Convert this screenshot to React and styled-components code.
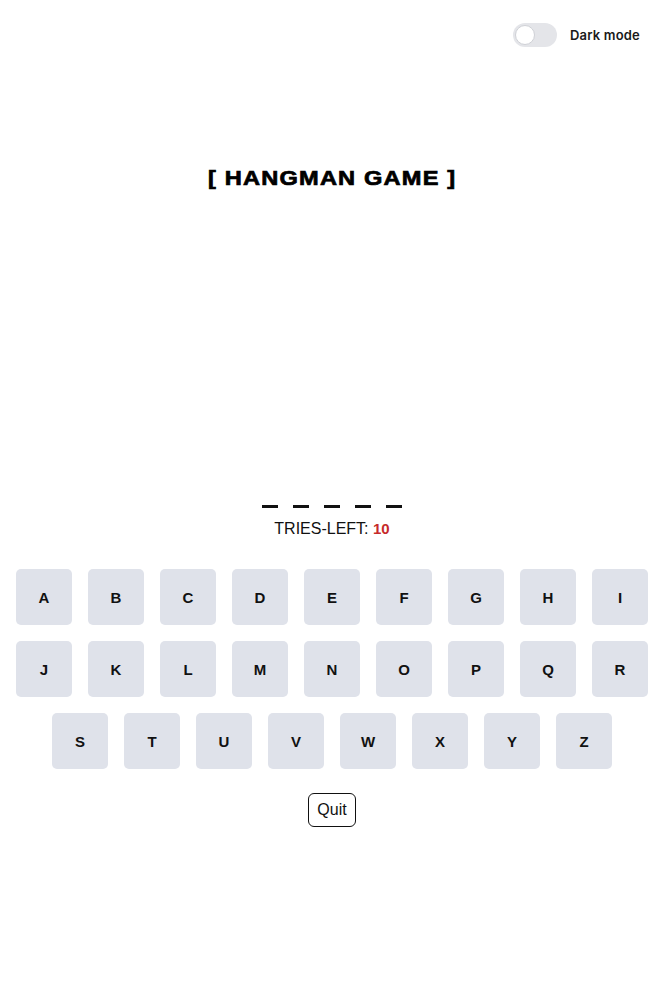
import React, { useState } from "react";
import styled, { createGlobalStyle } from "styled-components";

const GlobalStyle = createGlobalStyle`
  html, body {
    margin: 0;
    padding: 0;
    background: #ffffff;
    font-family: "Liberation Sans", Arial, sans-serif;
    color: #111;
  }
`;

const Page = styled.div`
  width: 664px;
  min-height: 991px;
  display: flex;
  flex-direction: column;
  align-items: center;
`;

const TopBar = styled.div`
  align-self: stretch;
  display: flex;
  justify-content: flex-end;
  align-items: center;
  gap: 13px;
  padding: 23px 24px 0 0;
  height: 24px;
`;

const Switch = styled.button`
  width: 44px;
  height: 24px;
  border-radius: 12px;
  border: none;
  padding: 2px;
  background: #e4e5e9;
  display: flex;
  align-items: center;
  justify-content: ${({ on }) => (on ? "flex-end" : "flex-start")};
  cursor: pointer;
`;

const Knob = styled.span`
  width: 18px;
  height: 18px;
  border-radius: 50%;
  background: #ffffff;
  border: 1px solid #cfd1d6;
`;

const SwitchLabel = styled.span`
  font-family: "Inter", "Liberation Sans", sans-serif;
  font-size: 13px;
  font-weight: 600;
  letter-spacing: 0.2px;
  color: #1a1a1a;
`;

const Title = styled.h1`
  margin: 119px 0 0;
  font-family: "Liberation Sans", Arial, sans-serif;
  font-weight: 700;
  font-size: 20px;
  letter-spacing: 1px;
  line-height: 24px;
  transform: scaleX(1.18);
  -webkit-text-stroke: 0.7px #000;
  color: #000;
`;

const Gallows = styled.div`
  height: 309px;
`;

const Word = styled.div`
  display: flex;
  gap: 15px;
  height: 14px;
  align-items: center;
`;

const Blank = styled.span`
  width: 16px;
  height: 3px;
  background: #111;
`;

const Tries = styled.div`
  margin-top: 7px;
  font-size: 16px;
  line-height: 18px;
  color: #111;
`;

const Count = styled.span`
  color: #c62a2a;
  font-weight: 700;
  font-size: 15px;
`;

const Keyboard = styled.div`
  margin-top: 31px;
  display: flex;
  flex-direction: column;
  align-items: center;
  gap: 16px;
`;

const KeyRow = styled.div`
  display: flex;
  gap: 16px;
`;

const Key = styled.button`
  width: 56px;
  height: 56px;
  border: none;
  border-radius: 5px;
  background: #dfe2ea;
  font-family: "Liberation Sans", Arial, sans-serif;
  font-weight: 700;
  font-size: 15px;
  color: #111;
  cursor: pointer;
  padding: 0;
`;

const QuitButton = styled.button`
  margin-top: 24px;
  height: 34px;
  padding: 0 8px;
  border: 1px solid #111;
  border-radius: 6px;
  background: #fff;
  font-family: "Liberation Sans", Arial, sans-serif;
  font-size: 16px;
  color: #111;
  cursor: pointer;
`;

const rows = ["ABCDEFGHI", "JKLMNOPQR", "STUVWXYZ"];

export default function App() {
  const [dark, setDark] = useState(false);
  const word = "_____";

  return (
    <Page>
      <GlobalStyle />
      <TopBar>
        <Switch on={dark ? 1 : 0} onClick={() => setDark(!dark)}>
          <Knob />
        </Switch>
        <SwitchLabel>Dark mode</SwitchLabel>
      </TopBar>
      <Title>[ HANGMAN GAME ]</Title>
      <Gallows />
      <Word>
        {word.split("").map((c, i) => (
          <Blank key={i} />
        ))}
      </Word>
      <Tries>
        TRIES-LEFT: <Count>10</Count>
      </Tries>
      <Keyboard>
        {rows.map((row) => (
          <KeyRow key={row}>
            {row.split("").map((l) => (
              <Key key={l}>{l}</Key>
            ))}
          </KeyRow>
        ))}
      </Keyboard>
      <QuitButton>Quit</QuitButton>
    </Page>
  );
}
